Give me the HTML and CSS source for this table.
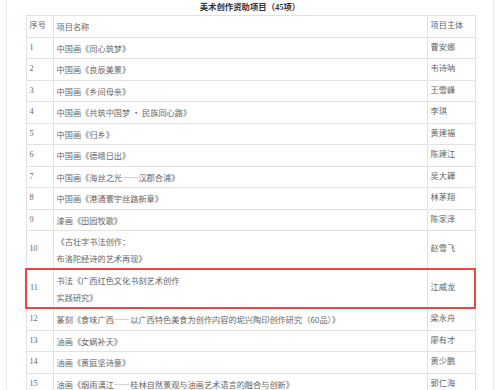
FILE: index.html
```html
<!DOCTYPE html>
<html lang="zh-CN">
<head>
<meta charset="utf-8">
<title>美术创作资助项目</title>
<link rel="stylesheet" href="styles.css">
</head>
<body>
<div class="page">
  <h2 class="title">美术创作资助项目（45项）</h2>
  <table class="grid">
    <colgroup><col class="c-no"><col class="c-name"><col class="c-owner"></colgroup>
    <tr><td>序号</td><td class="nm">项目名称</td><td>项目主体</td></tr>
    <tr><td>1</td><td class="nm">中国画《同心筑梦》</td><td>曹安娜</td></tr>
    <tr><td>2</td><td class="nm">中国画《良辰美景》</td><td>韦诗呐</td></tr>
    <tr><td>3</td><td class="nm">中国画《乡间母亲》</td><td>王雪峰</td></tr>
    <tr><td>4</td><td class="nm">中国画《共筑中国梦 • 民族同心路》</td><td>李琪</td></tr>
    <tr><td>5</td><td class="nm">中国画《归乡》</td><td>黄建福</td></tr>
    <tr><td>6</td><td class="nm">中国画《德峨日出》</td><td>陈建江</td></tr>
    <tr><td>7</td><td class="nm">中国画《海丝之光——汉郡合浦》</td><td>吴大韡</td></tr>
    <tr><td>8</td><td class="nm">中国画《港通寰宇丝路新章》</td><td>林茅翔</td></tr>
    <tr><td>9</td><td class="nm">漆画《田园牧歌》</td><td>陈家泽</td></tr>
    <tr><td>10</td><td class="nm">《古壮字书法创作：<br>布洛陀经诗的艺术再现》</td><td>赵雪飞</td></tr>
    <tr class="hl"><td>11</td><td class="nm">书法《广西红色文化书刻艺术创作<br>实践研究》</td><td>江威龙</td></tr>
    <tr><td>12</td><td class="nm">篆刻《食味广西——以广西特色美食为创作内容的坭兴陶印创作研究（60品）》</td><td>梁永舟</td></tr>
    <tr><td>13</td><td class="nm">油画《女娲补天》</td><td>廖有才</td></tr>
    <tr><td>14</td><td class="nm">油画《黄庭坚诗意》</td><td>黄少鹏</td></tr>
    <tr><td>15</td><td class="nm">油画《烟雨漓江——桂林自然景观与油画艺术语言的融合与创新》</td><td>郭仁海</td></tr>
  </table>
</div>
</body>
</html>
```
FILE: styles.css
```css
html, body {
  margin: 0;
  padding: 0;
  background: #fff;
}
body {
  font-family: "Liberation Serif", "Noto Sans CJK SC", serif;
  color: #666;
  overflow: hidden;
  height: 390px;
}
.page {
  margin-left: 6px;
  width: 486px;
  min-height: 390px;
  border-left: 1px solid #e8e8e8;
  border-right: 1px solid #e8e8e8;
  padding-top: 2px;
}
.title {
  margin: 0 0 1px 0;
  font-size: 8.4px;
  line-height: 12px;
  font-weight: bold;
  color: #333;
  text-align: center;
}
.grid {
  margin-left: 18px;
  width: 449px;
  border-collapse: collapse;
  table-layout: fixed;
  font-size: 8.2px;
}
.c-no { width: 27px; }
.c-name { width: 374px; }
.c-owner { width: 48px; }
.grid td {
  border: 1px solid #e2e2e2;
  padding: 2px 3px;
  line-height: 16.5px;
  vertical-align: middle;
  white-space: nowrap;
  overflow: hidden;
}
.grid td.nm {
  font-family: "Noto Sans CJK SC", "Liberation Serif", sans-serif;
}
.grid tr.hl td {
  border-top: 2px solid #ef4444;
  border-bottom: 2px solid #ef4444;
}
.grid tr.hl td:first-child { border-left: 2px solid #ef4444; }
.grid tr.hl td:last-child { border-right: 2px solid #ef4444; }
```
